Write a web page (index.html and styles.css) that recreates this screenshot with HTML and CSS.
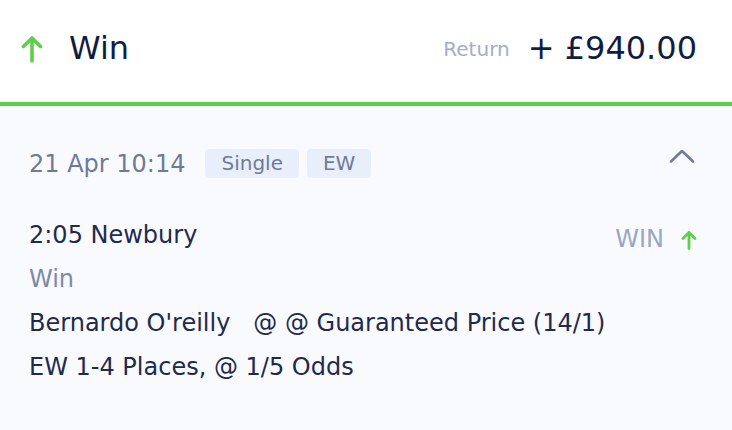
FILE: index.html
```html
<!DOCTYPE html>
<html lang="en">
<head>
<meta charset="utf-8">
<title>Bet receipt</title>
<link rel="stylesheet" href="styles.css">
</head>
<body>
<div class="card">
  <header class="head">
    <div class="head-left">
      <svg class="head-arrow" width="22" height="28" viewBox="0 0 22 28" aria-hidden="true">
        <path d="M11 26V3M2.5 11.5L11 3l8.5 8.5" fill="none" stroke="#5fce4a" stroke-width="3.6" stroke-linecap="round" stroke-linejoin="round"/>
      </svg>
      <span class="title">Win</span>
    </div>
    <div class="head-right">
      <span class="return-label">Return</span>
      <span class="amount">+ £940.00</span>
    </div>
  </header>
  <section class="details">
    <div class="meta-row">
      <div class="meta-left">
        <span class="date">21 Apr 10:14</span>
        <span class="tag">Single</span>
        <span class="tag">EW</span>
      </div>
      <svg class="chevron" width="28" height="16" viewBox="0 0 28 16" aria-hidden="true">
        <path d="M3 13.5L14 3l11 10.5" fill="none" stroke="#707b9a" stroke-width="2.6" stroke-linecap="round" stroke-linejoin="round"/>
      </svg>
    </div>
    <div class="leg">
      <div class="leg-info">
        <div class="line event">2:05 Newbury</div>
        <div class="line market">Win</div>
        <div class="line">Bernardo O'reilly&nbsp;&nbsp; @ @ Guaranteed Price (14/1)</div>
        <div class="line">EW 1-4 Places, @ 1/5 Odds</div>
      </div>
      <div class="leg-result">
        <span class="result-label">WIN</span>
        <svg class="result-arrow" width="16" height="20" viewBox="0 0 16 20" aria-hidden="true">
          <path d="M8 18.5V2.5M2 8.5l6-6 6 6" fill="none" stroke="#5fce4a" stroke-width="2.8" stroke-linecap="round" stroke-linejoin="round"/>
        </svg>
      </div>
    </div>
  </section>
</div>
</body>
</html>
```
FILE: styles.css
```css
html, body {
  margin: 0;
  padding: 0;
  height: 100%;
}
body {
  background: #f9fafe;
  font-family: "DejaVu Sans", Verdana, sans-serif;
  color: #1f2a4d;
}
.card {
  min-height: 100%;
  background: #f9fafe;
}
.head {
  height: 106px;
  box-sizing: border-box;
  background: #ffffff;
  border-bottom: 4px solid #5fce4a;
  display: flex;
  align-items: center;
  justify-content: space-between;
  padding: 0 35px 6px 21px;
}
.head-left {
  display: flex;
  align-items: center;
  gap: 26px;
}
.head-arrow {
  display: block;
  margin-top: 1px;
}
.title {
  font-size: 32px;
  color: #0f1d45;
}
.head-right {
  display: flex;
  align-items: center;
  gap: 18px;
}
.return-label {
  font-size: 20px;
  color: #a3adc9;
  margin-top: 1px;
}
.amount {
  font-size: 32px;
  color: #0f1d45;
}
.details {
  padding: 43px 35px 0 29px;
}
.meta-row {
  display: flex;
  justify-content: space-between;
  align-items: flex-start;
}
.meta-left {
  display: flex;
  align-items: center;
  gap: 8px;
}
.date {
  font-size: 24px;
  color: #6f7a99;
  margin-right: 12px;
}
.tag {
  font-size: 20px;
  color: #6f7a99;
  background: #e9effa;
  border-radius: 4px;
  height: 29px;
  line-height: 29px;
  padding: 0 16px;
}
.chevron {
  display: block;
  margin-top: -1px;
  margin-right: 1px;
}
.leg {
  margin-top: 35px;
  display: flex;
  justify-content: space-between;
  align-items: flex-start;
}
.line {
  font-size: 24px;
  line-height: 44px;
  color: #1f2a4d;
}
.market {
  color: #7d89ab;
}
.leg-result {
  display: flex;
  align-items: center;
  gap: 17px;
  margin-top: 12px;
}
.result-label {
  font-size: 24px;
  color: #9ba6c4;
}
.result-arrow {
  display: block;
  margin-top: 2px;
}
```
